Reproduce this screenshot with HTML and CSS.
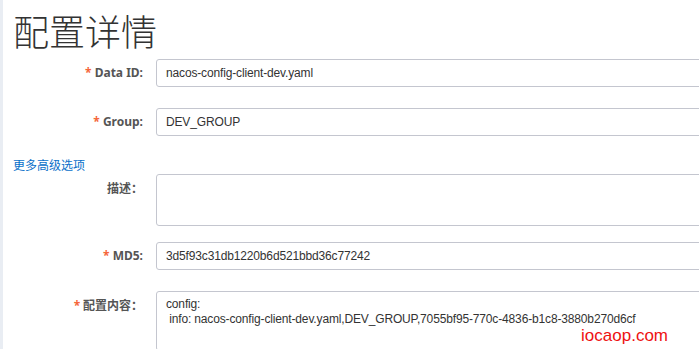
FILE: index.html
```html
<!DOCTYPE html>
<html lang="zh-CN">
<head>
<meta charset="utf-8">
<title>配置详情</title>
<link rel="stylesheet" href="styles.css">
</head>
<body>
<div class="page">
  <h1 class="title">配置详情</h1>
  <div class="form">
    <div class="row row-first">
      <label class="label"><span class="req">*</span> Data ID:</label>
      <div class="field input">nacos-config-client-dev.yaml</div>
    </div>
    <div class="row">
      <label class="label"><span class="req">*</span> Group:</label>
      <div class="field input">DEV_GROUP</div>
    </div>
    <a class="more" href="#">更多高级选项</a>
    <div class="row row-desc">
      <label class="label label-cjk">描述：</label>
      <div class="field area area-desc"></div>
    </div>
    <div class="row">
      <label class="label"><span class="req">*</span> MD5:</label>
      <div class="field input">3d5f93c31db1220b6d521bbd36c77242</div>
    </div>
    <div class="row">
      <label class="label label-cjk"><span class="req">*</span> 配置内容：</label>
      <div class="field area area-content">config:<br>&nbsp;info: nacos-config-client-dev.yaml,DEV_GROUP,7055bf95-770c-4836-b1c8-3880b270d6cf</div>
    </div>
  </div>
  <div class="watermark">iocaop.com</div>
</div>
</body>
</html>
```

FILE: styles.css
```css
html, body {
  margin: 0;
  padding: 0;
  overflow: hidden;
  background: #fff;
}
.page {
  position: relative;
  height: 349px;
  overflow: hidden;
  border-left: 3px solid #e9edf3;
  padding-left: 10px;
  font-family: "Liberation Sans", "Noto Sans CJK SC", sans-serif;
  font-size: 12px;
  color: #333;
}
.title {
  margin: 0;
  padding-top: 12px;
  height: 36px;
  line-height: 36px;
  font-family: "Noto Sans CJK SC", sans-serif;
  font-size: 36px;
  font-weight: 300;
  color: #333;
}
.form {
  padding-top: 11px;
}
.row {
  display: grid;
  grid-template-columns: 130px 560px;
  column-gap: 13px;
  align-items: start;
  margin-top: 21px;
}
.row-first {
  margin-top: 0;
}
.row-desc {
  margin-top: 0;
}
.row-desc + .row {
  margin-top: 16px;
}
.label {
  text-align: right;
  line-height: 28px;
  font-family: "Noto Sans", "Noto Sans CJK SC", sans-serif;
  font-weight: 700;
  font-size: 12px;
  color: #555;
  white-space: nowrap;
}
.label-cjk {
  font-family: "Noto Sans CJK SC", sans-serif;
}
.req {
  color: #f5663a;
  font-family: "Noto Sans", sans-serif;
}
.field {
  box-sizing: border-box;
  border: 1px solid #c4c6cf;
  border-radius: 3px;
  background: #fff;
  color: #333;
  font-family: "Liberation Sans", "Noto Sans CJK SC", sans-serif;
  font-size: 12px;
  letter-spacing: -0.15px;
  white-space: nowrap;
}
.input {
  height: 28px;
  line-height: 26px;
  padding: 0 9px;
}
.area {
  padding: 5px 9px;
  line-height: 15px;
}
.area-desc {
  height: 52px;
}
.area-content {
  height: 60px;
}
.more {
  display: block;
  margin-top: 20px;
  line-height: 18px;
  font-family: "Noto Sans CJK SC", sans-serif;
  font-size: 12px;
  color: #0a70c9;
  text-decoration: none;
}
.watermark {
  position: absolute;
  top: 327px;
  right: 31px;
  font-family: "Liberation Sans", sans-serif;
  font-size: 17px;
  line-height: 17px;
  color: #ee1111;
}
```
